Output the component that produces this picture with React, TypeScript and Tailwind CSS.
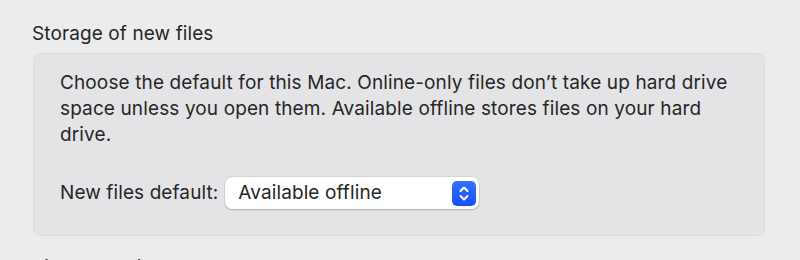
import React from "react";

export default function App() {
  return (
    <div
      className="w-[800px] h-[260px] overflow-hidden bg-[#ececec] text-[#262626]"
      style={{ fontFamily: "Inter, 'Noto Sans', sans-serif" }}
    >
      <div className="pt-[21px] pl-[32px] pr-[35px]">
        <div className="text-[19px] leading-[26px] tracking-[0.1px]">Storage of new files</div>
        <div className="mt-[6px] ml-[1px] rounded-[8px] border border-[#dcdcdc] bg-[#e4e4e6] pl-[26px] pr-[20px] pt-[16px] pb-[26px]">
          <p className="text-[19px] leading-[26px] tracking-[0.12px]">
            Choose the default for this Mac. Online-only files don’t take up hard drive
            <br />
            space unless you open them. Available offline stores files on your hard
            <br />
            drive.
          </p>
          <div className="mt-[29px] flex items-center gap-[7px]">
            <span className="text-[19px] leading-[26px] tracking-[0.1px]">New files default:</span>
            <div className="flex h-[32px] w-[254px] items-center justify-between rounded-[7px] bg-white pl-[13px] pr-[3px] shadow-[0_0_0_0.5px_rgba(0,0,0,0.12),0_1px_1.5px_rgba(0,0,0,0.2)]">
              <span className="text-[19px] leading-[26px] tracking-[0.1px]">Available offline</span>
              <div className="flex h-[25px] w-[24px] items-center justify-center rounded-[5px] bg-gradient-to-b from-[#3372ff] to-[#1550f7]">
                <svg width="12" height="17" viewBox="0 0 12 17" fill="none" stroke="white" strokeWidth="2" strokeLinecap="round" strokeLinejoin="round">
                  <path d="M2.5 6 L6 2.5 L9.5 6" />
                  <path d="M2.5 11 L6 14.5 L9.5 11" />
                </svg>
              </div>
            </div>
          </div>
        </div>
        <div className="mt-[19px] text-[19px] leading-[26px] tracking-[0.1px]">Sidebar options</div>
      </div>
    </div>
  );
}
